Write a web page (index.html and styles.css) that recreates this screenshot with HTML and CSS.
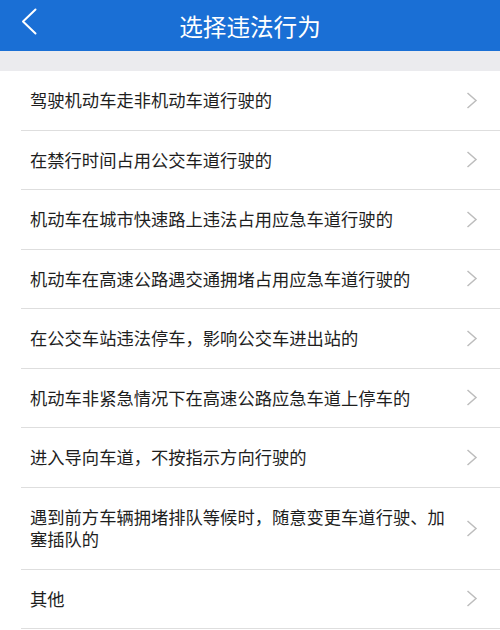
FILE: index.html
```html
<!DOCTYPE html>
<html lang="zh-CN">
<head>
<meta charset="utf-8">
<title>选择违法行为</title>
<link rel="stylesheet" href="styles.css">
</head>
<body>
<header class="topbar">
  <span class="back">
    <svg width="16" height="27" viewBox="0 0 16 27"><path d="M14.5 1.5 L2 13.5 L14.5 25.5" fill="none" stroke="#fff" stroke-width="2" stroke-linecap="round" stroke-linejoin="round"/></svg>
  </span>
  <h1 class="title">选择违法行为</h1>
</header>
<div class="gap"></div>
<ul class="list">
  <li class="row"><span class="text">驾驶机动车走非机动车道行驶的</span><span class="chev"><svg width="12" height="17" viewBox="0 0 12 17"><path d="M1.5 1 L10 8.5 L1.5 16" fill="none" stroke="#bdbdbd" stroke-width="1.5"/></svg></span></li>
  <li class="row"><span class="text">在禁行时间占用公交车道行驶的</span><span class="chev"><svg width="12" height="17" viewBox="0 0 12 17"><path d="M1.5 1 L10 8.5 L1.5 16" fill="none" stroke="#bdbdbd" stroke-width="1.5"/></svg></span></li>
  <li class="row"><span class="text">机动车在城市快速路上违法占用应急车道行驶的</span><span class="chev"><svg width="12" height="17" viewBox="0 0 12 17"><path d="M1.5 1 L10 8.5 L1.5 16" fill="none" stroke="#bdbdbd" stroke-width="1.5"/></svg></span></li>
  <li class="row"><span class="text">机动车在高速公路遇交通拥堵占用应急车道行驶的</span><span class="chev"><svg width="12" height="17" viewBox="0 0 12 17"><path d="M1.5 1 L10 8.5 L1.5 16" fill="none" stroke="#bdbdbd" stroke-width="1.5"/></svg></span></li>
  <li class="row"><span class="text">在公交车站违法停车，影响公交车进出站的</span><span class="chev"><svg width="12" height="17" viewBox="0 0 12 17"><path d="M1.5 1 L10 8.5 L1.5 16" fill="none" stroke="#bdbdbd" stroke-width="1.5"/></svg></span></li>
  <li class="row"><span class="text">机动车非紧急情况下在高速公路应急车道上停车的</span><span class="chev"><svg width="12" height="17" viewBox="0 0 12 17"><path d="M1.5 1 L10 8.5 L1.5 16" fill="none" stroke="#bdbdbd" stroke-width="1.5"/></svg></span></li>
  <li class="row"><span class="text">进入导向车道，不按指示方向行驶的</span><span class="chev"><svg width="12" height="17" viewBox="0 0 12 17"><path d="M1.5 1 L10 8.5 L1.5 16" fill="none" stroke="#bdbdbd" stroke-width="1.5"/></svg></span></li>
  <li class="row"><span class="text">遇到前方车辆拥堵排队等候时，随意变更车道行驶、加塞插队的</span><span class="chev"><svg width="12" height="17" viewBox="0 0 12 17"><path d="M1.5 1 L10 8.5 L1.5 16" fill="none" stroke="#bdbdbd" stroke-width="1.5"/></svg></span></li>
  <li class="row"><span class="text">其他</span><span class="chev"><svg width="12" height="17" viewBox="0 0 12 17"><path d="M1.5 1 L10 8.5 L1.5 16" fill="none" stroke="#bdbdbd" stroke-width="1.5"/></svg></span></li>
</ul>
</body>
</html>
```
FILE: styles.css
```css
* { box-sizing: border-box; }
html, body {
  margin: 0;
  padding: 0;
  background: #ffffff;
  font-family: "Noto Sans CJK SC", "Noto Sans", sans-serif;
  color: #1e1e1e;
}
.topbar {
  height: 51px;
  background: #1a6fd5;
  display: flex;
  align-items: center;
  justify-content: center;
  position: relative;
}
.back {
  position: absolute;
  left: 21px;
  top: 8px;
  display: flex;
}
.title {
  margin: 0;
  font-size: 23.6px;
  font-weight: 400;
  color: #ffffff;
}
.gap {
  height: 20px;
  background: #ebebee;
}
.list {
  list-style: none;
  margin: 0;
  padding: 0;
}
.row {
  display: flex;
  align-items: center;
  margin-left: 21px;
  padding: 18px 0 18px 9px;
  border-bottom: 1px solid #dedede;
  font-size: 17.3px;
  line-height: 22.5px;
}
.text {
  width: 418px;
}
.chev {
  margin-left: auto;
  margin-right: 22px;
  display: flex;
}
```
